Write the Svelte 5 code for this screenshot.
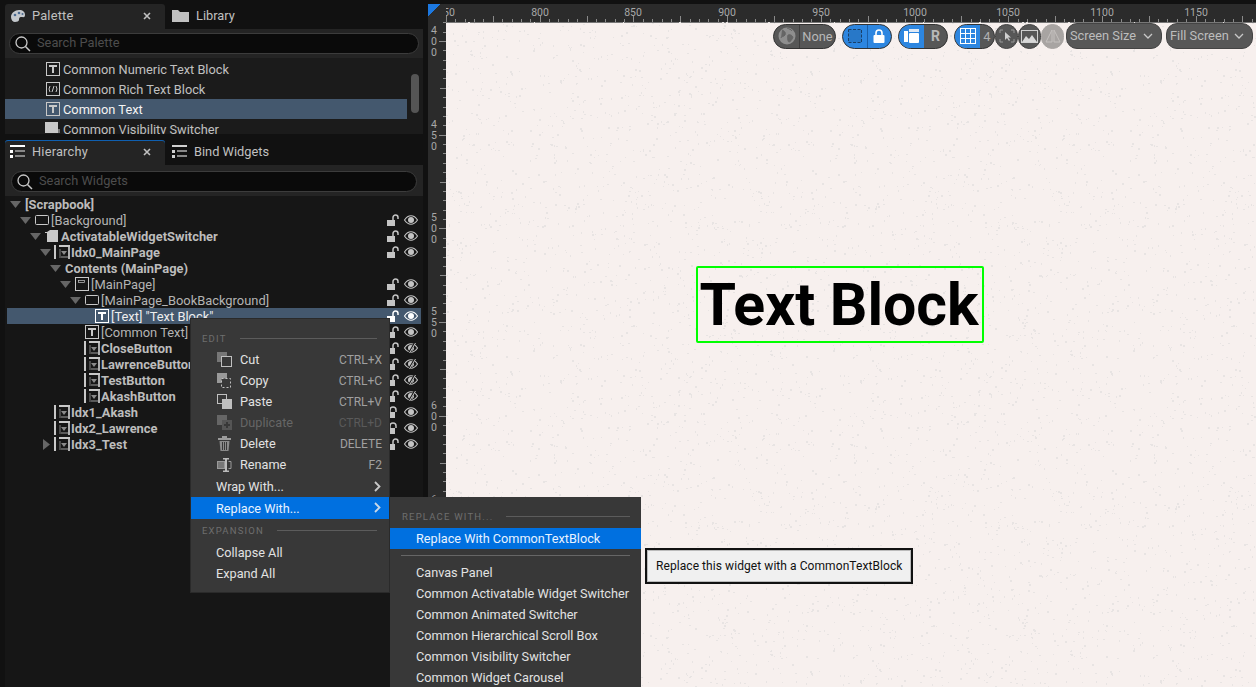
<script>
  const palette = [
    { icon: 'text', label: 'Common Numeric Text Block' },
    { icon: 'rich', label: 'Common Rich Text Block' },
    { icon: 'text', label: 'Common Text', selected: true },
    { icon: 'vis', label: 'Common Visibility Switcher' }
  ];
  const tree = [
    { d: 0, arrow: 'down', label: '[Scrapbook]', bold: true },
    { d: 1, arrow: 'down', icon: 'border', label: '[Background]', ctl: 1 },
    { d: 2, arrow: 'down', icon: 'switcher', label: 'ActivatableWidgetSwitcher', bold: true, ctl: 1 },
    { d: 3, arrow: 'down', icon: 'button', label: 'Idx0_MainPage', bold: true, ctl: 1 },
    { d: 4, arrow: 'down', label: 'Contents (MainPage)', bold: true },
    { d: 5, arrow: 'down', icon: 'page', label: '[MainPage]', ctl: 1 },
    { d: 6, arrow: 'down', icon: 'border', label: '[MainPage_BookBackground]', ctl: 1 },
    { d: 7, icon: 'text', label: '[Text] "Text Block"', selected: true, ctl: 1 },
    { d: 6, icon: 'text', label: '[Common Text]', ctl: 1 },
    { d: 6, icon: 'button', label: 'CloseButton', bold: true, ctl: 1, hidden: true },
    { d: 6, icon: 'button', label: 'LawrenceButton', bold: true, ctl: 1, hidden: true },
    { d: 6, icon: 'button', label: 'TestButton', bold: true, ctl: 1, hidden: true },
    { d: 6, icon: 'button', label: 'AkashButton', bold: true, ctl: 1, hidden: true },
    { d: 3, icon: 'button', label: 'Idx1_Akash', bold: true, ctl: 1, locked: true },
    { d: 3, icon: 'button', label: 'Idx2_Lawrence', bold: true, ctl: 1, locked: true },
    { d: 3, arrow: 'right', icon: 'button', label: 'Idx3_Test', bold: true, ctl: 1 }
  ];
  const editItems = [
    { icon: 'cut', label: 'Cut', key: 'CTRL+X' },
    { icon: 'copy', label: 'Copy', key: 'CTRL+C' },
    { icon: 'paste', label: 'Paste', key: 'CTRL+V' },
    { icon: 'dup', label: 'Duplicate', key: 'CTRL+D', off: true },
    { icon: 'trash', label: 'Delete', key: 'DELETE' },
    { icon: 'rename', label: 'Rename', key: 'F2' }
  ];
  const replaceItems = ['Canvas Panel', 'Common Activatable Widget Switcher', 'Common Animated Switcher', 'Common Hierarchical Scroll Box', 'Common Visibility Switcher', 'Common Widget Carousel'];

  const hTicks = [];
  const hLabels = [];
  for (let v = 750; v <= 1190; v += 5) {
    const x = (v - 750) * 1.874;
    hTicks.push({ x: Math.round(x), major: v % 25 === 0 });
    if (v % 50 === 0) hLabels.push({ x: Math.round(x), v });
  }
  const vTicks = [];
  const vLabels = [];
  for (let v = 380; v <= 760; v += 5) {
    const y = 41 + (v - 400) * 1.874 - 22;
    if (y < 0) continue;
    vTicks.push({ y: Math.round(y), kind: v % 50 === 0 ? 2 : v % 25 === 0 ? 1 : 0 });
    if (v % 50 === 0) vLabels.push({ y: Math.round(y), d: String(v).split('') });
  }
  let seed = 7;
  const rnd = () => (seed = (seed * 16807) % 2147483647) / 2147483647;
  const specks = [];
  for (let i = 0; i < 1100; i++) {
    specks.push({ x: Math.floor(rnd() * 300), y: Math.floor(rnd() * 300), w: rnd() > 0.6 ? 2 : 1, h: rnd() > 0.6 ? 2 : 1 });
  }
</script>

{#snippet ico(kind)}
  <svg class="ico" width="16" height="16" viewBox="0 0 16 16" aria-hidden="true">
    {#if kind === 'text'}
      <rect x="1.500" y="1.500" width="13" height="13" fill="none" stroke="currentColor" />
      <rect x="4" y="4" width="8" height="2" fill="currentColor" />
      <rect x="7" y="4" width="2" height="8" fill="currentColor" />
    {:else if kind === 'rich'}
      <rect x="1.500" y="1.500" width="13" height="13" fill="none" stroke="currentColor" />
      <path d="M5 5 4 8l1 3M11 5l1 3-1 3M9 5 7 11" fill="none" stroke="currentColor" />
    {:else if kind === 'vis'}
      <rect x="0" y="1" width="13" height="11" fill="#c8c8c8" />
      <rect x="13" y="8" width="2" height="4" fill="#777" />
    {:else if kind === 'border'}
      <rect x="1.500" y="3.500" width="13" height="9" rx="1" fill="none" stroke="currentColor" />
    {:else if kind === 'page'}
      <rect x="1.500" y="1.500" width="13" height="13" fill="none" stroke="currentColor" />
      <rect x="4.500" y="4.500" width="6" height="2" fill="none" stroke="currentColor" stroke-width=".7" />
    {:else if kind === 'switcher'}
      <path d="M6 1h8v12H3V4H1V3h2z" fill="currentColor" transform="translate(0 1)" />
    {:else if kind === 'button'}
      <rect x="0" y="1" width="2" height="14" fill="currentColor" />
      <rect x="5" y="1" width="11" height="2" fill="currentColor" />
      <rect x="14" y="3" width="2" height="12" fill="#b0b0b0" />
      <rect x="5" y="5" width="2" height="9" fill="#4a4a4a" />
      <path d="M7 7h6l-3 4z" fill="#8a8a8a" />
      <rect x="7" y="12" width="7" height="2" fill="#5a5a5a" />
    {:else if kind === 'cut'}
      <rect x="0" y="0" width="10" height="10" fill="#777" />
      <rect x="4.500" y="4.500" width="10" height="10" fill="#383838" stroke="#c0c0c0" />
    {:else if kind === 'copy'}
      <rect x="0" y="0" width="10" height="10" fill="#999" />
      <rect x="4.500" y="5.500" width="9" height="9" fill="#383838" stroke="#c0c0c0" stroke-dasharray="2 2" />
    {:else if kind === 'paste'}
      <rect x=".5" y=".5" width="9" height="9" fill="none" stroke="#c0c0c0" />
      <rect x="5" y="5" width="10" height="10" fill="#c0c0c0" />
    {:else if kind === 'dup'}
      <rect x="0" y="0" width="10" height="10" fill="#666" />
      <rect x="5" y="5" width="10" height="10" fill="#555" />
      <rect x="9" y="7" width="2" height="6" fill="#383838" />
      <rect x="7" y="9" width="6" height="2" fill="#383838" />
    {:else if kind === 'trash'}
      <rect x="1" y="2" width="13" height="2" fill="#9a9a9a" />
      <rect x="5" y="0" width="5" height="2" fill="#9a9a9a" />
      <path d="M2.500 5h10l-1 10h-8z" fill="#8a8a8a" />
      <path d="M5.500 6v8M7.500 6v8M9.500 6v8" stroke="#383838" />
    {:else if kind === 'rename'}
      <rect x=".5" y="4.500" width="7" height="7" fill="#777" stroke="#999" />
      <rect x="8" y="1" width="2" height="14" fill="#bbb" />
      <rect x="6" y="1" width="6" height="1.500" fill="#bbb" />
      <rect x="6" y="13.500" width="6" height="1.500" fill="#bbb" />
      <path d="M11.500 4.500H14v7h-2.500" fill="none" stroke="#999" />
    {/if}
  </svg>
{/snippet}

{#snippet search(text)}
  <div class="searchbox">
    <svg width="18" height="18" viewBox="0 0 18 18" aria-hidden="true">
      <circle cx="7.500" cy="7.500" r="5.500" fill="none" stroke="#c8c8c8" stroke-width="1.300" />
      <path d="M11.500 11.500 16 16" stroke="#c8c8c8" stroke-width="1.500" />
    </svg>
    <span>{text}</span>
  </div>
{/snippet}

{#snippet close()}
  <svg class="close" width="8" height="8" viewBox="0 0 8 8" aria-hidden="true"><path d="M1 1l6 6M7 1 1 7" stroke="#c0c0c0" stroke-width="1.600" /></svg>
{/snippet}

{#snippet listIcon(color)}
  <svg width="15" height="13" viewBox="0 0 15 13" aria-hidden="true">
    <rect x="0" y="0" width="15" height="2" fill={color} />
    <rect x="0" y="5" width="3" height="3" fill={color} />
    <rect x="5" y="5" width="10" height="2" fill="#888" />
    <rect x="0" y="10" width="3" height="3" fill={color} />
    <rect x="5" y="10" width="10" height="2" fill="#888" />
  </svg>
{/snippet}

<div class="app">
  <aside class="left">
    <section class="palette">
      <div class="tabs">
        <div class="tab active">
          <svg width="16" height="14" viewBox="0 0 16 14" aria-hidden="true">
            <path d="M1 8C1 4 5 1 9 1s6 2 6 5-2 2-4 2-2 2-2 3-2 2-4 2-4-2-4-5z" fill="#c4c8cc" />
            <circle cx="5" cy="6" r="1.300" fill="#4a6a90" />
            <circle cx="9" cy="4" r="1.300" fill="#4a6a90" />
            <circle cx="12.500" cy="5" r="1" fill="#4a6a90" />
          </svg>
          <span class="tablabel">Palette</span>
          {@render close()}
        </div>
        <div class="tab">
          <svg width="17" height="13" viewBox="0 0 17 13" aria-hidden="true"><path d="M0 1h6l2 2h9v10H0z" fill="#c0c0c0" /></svg>
          <span class="tablabel">Library</span>
        </div>
      </div>
      <div class="searchwrap">{@render search('Search Palette')}</div>
      <div class="palette-list">
        {#each palette as p}
          <div class="pal-row" class:selected={p.selected}>
            {@render ico(p.icon)}
            <span>{p.label}</span>
          </div>
        {/each}
        <div class="scrollthumb"></div>
      </div>
    </section>
    <section class="hierarchy">
      <div class="tabs blue">
        <div class="tab active">
          {@render listIcon('#fff')}
          <span class="tablabel">Hierarchy</span>
          {@render close()}
        </div>
        <div class="tab">
          {@render listIcon('#d0d0d0')}
          <span class="tablabel">Bind Widgets</span>
        </div>
      </div>
      <div class="searchwrap h">{@render search('Search Widgets')}</div>
      <div class="tree">
        {#each tree as r}
          <div class="row" class:selected={r.selected} class:bold={r.bold} class:noicon={!r.icon} style="padding-left:{10 * r.d + 3}px">
            <span class="arrow">
              {#if r.arrow === 'down'}
                <svg width="11" height="7" viewBox="0 0 11 7" aria-hidden="true"><path d="M0 0h11L5.500 7z" fill="#666" /></svg>
              {:else if r.arrow === 'right'}
                <svg class="ra" width="7" height="11" viewBox="0 0 7 11" aria-hidden="true"><path d="M0 0v11l7-5.500z" fill="#666" /></svg>
              {/if}
            </span>
            {#if r.icon}{@render ico(r.icon)}{/if}
            <span class="lbl">{r.label}</span>
            {#if r.ctl}
              <span class="ctl">
                <svg width="12" height="12" viewBox="0 0 12 12" aria-hidden="true">
                  {#if r.locked}
                    <path d="M3 6V4a3 3 0 0 1 6 0v2" fill="none" stroke="currentColor" stroke-width="1.500" />
                  {:else}
                    <path d="M6 6V3.500a2.500 2.500 0 0 1 5 0V5" fill="none" stroke="currentColor" stroke-width="1.500" />
                  {/if}
                  <rect x="0" y="6" width="8" height="6" fill="currentColor" />
                </svg>
                <svg width="14" height="10" viewBox="0 0 14 10" aria-hidden="true">
                  <path d="M.5 5C2.500 2 5 .8 7 .8s4.500 1.200 6.500 4.200c-2 3-4.500 4.200-6.500 4.200S2.500 8 .5 5z" fill="none" stroke="currentColor" stroke-width="1.100" />
                  <circle cx="7" cy="5" r="3" fill="currentColor" />
                  {#if r.hidden}<path d="M11 0 5 10" stroke="#161616" stroke-width="2" /><path d="M11.500 0 5.500 10" stroke="currentColor" />{/if}
                </svg>
              </span>
            {/if}
          </div>
        {/each}
      </div>
    </section>
  </aside>

  <main class="view">
    <div class="topgap"></div>
    <div class="ruler-row">
      <div class="corner"></div>
      <svg class="hruler" width="810" height="18">
        {#each hTicks as t}
          <rect x={t.x} y={t.major ? 12 : 15} width="1" height={t.major ? 6 : 3} fill="#8a8a8a" />
        {/each}
        {#each hLabels as l}
          <text x={l.x} y="12" text-anchor="middle">{l.v}</text>
        {/each}
      </svg>
    </div>
    <div class="body-row">
      <svg class="vruler" width="18" height="665">
        {#each vTicks as t}
          <rect x={t.kind === 2 ? 11 : t.kind === 1 ? 12 : 15} y={t.y} width={t.kind === 2 ? 7 : t.kind === 1 ? 6 : 3} height="1" fill="#8a8a8a" />
        {/each}
        {#each vLabels as l}
          {#each l.d as c, i}
            <text x="6" y={l.y + 4 + (i - 1) * 11} text-anchor="middle">{c}</text>
          {/each}
        {/each}
      </svg>
      <div class="canvas">
        <svg class="speck" width="100%" height="100%" aria-hidden="true">
          <defs>
            <pattern id="sp" width="300" height="300" patternUnits="userSpaceOnUse">
              {#each specks as s}<rect x={s.x} y={s.y} width={s.w} height={s.h} fill="#e8e4e3" />{/each}
            </pattern>
          </defs>
          <rect width="100%" height="100%" fill="url(#sp)" />
        </svg>
        <div class="textblock">Text Block</div>
        <div class="toolbar">
          <div class="pill">
            <span class="seg"><svg width="18" height="18" viewBox="0 0 18 18" aria-hidden="true"><circle cx="9" cy="9" r="8.500" fill="#8e8e8e" /><path d="M4 3c3 1 4 3 3 5S3 9 3 11M10 8c3-1 4 1 5 2-1 3-3 5-4 5s-2-4-1-7zM9 1c2 1 4 1 5 3" fill="#666" stroke="#666" /></svg></span>
            <span class="seg txt">None</span>
          </div>
          <div class="pill blue">
            <span class="seg"><svg width="18" height="18" viewBox="0 0 18 18" aria-hidden="true"><rect x="2.500" y="2.500" width="13" height="13" fill="#2878c8" stroke="#1a3f66" stroke-dasharray="3 1.500" /></svg></span>
            <span class="seg"><svg width="12" height="14" viewBox="0 0 12 14" aria-hidden="true"><path d="M3 6V4a3 3 0 0 1 6 0v2" fill="none" stroke="#fff" stroke-width="1.600" /><rect x="0.500" y="6" width="11" height="8" rx="1" fill="#fff" /></svg></span>
          </div>
          <div class="pill split">
            <span class="seg on"><svg width="16" height="16" viewBox="0 0 16 16" aria-hidden="true"><rect x="0" y="3" width="4" height="11" fill="#fff" /><rect x="5" y="1" width="10" height="3" fill="#dfe9f5" /><rect x="5" y="5" width="10" height="10" rx="1" fill="#fff" /></svg></span>
            <span class="seg r">R</span>
          </div>
          <div class="pill split grid">
            <span class="seg on"><svg width="16" height="16" viewBox="0 0 16 16" aria-hidden="true"><rect x=".5" y=".5" width="15" height="15" fill="none" stroke="#fff" /><path d="M5.500 0v16M10.500 0v16M0 5.500h16M0 10.500h16" stroke="#fff" /></svg></span>
            <span class="seg g4">4</span>
          </div>
          <div class="round"><svg width="16" height="14" viewBox="0 0 16 14" aria-hidden="true"><path d="M1 4V1h3M12 1h3v3M15 10v3h-3M4 13H1v-3" fill="none" stroke="#999" /><path d="M6 3v8l2-2 2 3 1-1-2-2.500h3z" fill="#d0d0d0" /></svg></div>
          <div class="round"><svg width="17" height="13" viewBox="0 0 17 13" aria-hidden="true"><rect x=".5" y=".5" width="16" height="12" fill="none" stroke="#d0d0d0" /><path d="M1 12l4-6 3 3 3-4 5 7z" fill="#d8d8d8" /></svg></div>
          <div class="round dim"><svg width="16" height="14" viewBox="0 0 16 14" aria-hidden="true"><path d="M7 1v12H1zM9 1v12h6z" fill="none" stroke="#c4c0be" /></svg></div>
          <div class="drop w1"><span>Screen Size</span><svg width="10" height="6" viewBox="0 0 10 6" aria-hidden="true"><path d="M1 1l4 4 4-4" fill="none" stroke="#c8c8c8" stroke-width="1.300" /></svg></div>
          <div class="drop w2"><span>Fill Screen</span><svg width="10" height="6" viewBox="0 0 10 6" aria-hidden="true"><path d="M1 1l4 4 4-4" fill="none" stroke="#c8c8c8" stroke-width="1.300" /></svg></div>
        </div>
      </div>
    </div>
  </main>

  <div class="menu ctx">
    <div class="head"><span>EDIT</span><i></i></div>
    {#each editItems as m}
      <div class="item icon" class:off={m.off}>
        {@render ico(m.icon)}
        <span class="m">{m.label}</span>
        <span class="key">{m.key}</span>
      </div>
    {/each}
    <div class="item sub wrap"><span class="m">Wrap With...</span><svg class="chev" width="7" height="11" viewBox="0 0 7 11" aria-hidden="true"><path d="M1 1l4.500 4.500L1 10" fill="none" stroke="#c8c8c8" stroke-width="1.800" /></svg></div>
    <div class="item sub hot"><span class="m">Replace With...</span><svg class="chev" width="7" height="11" viewBox="0 0 7 11" aria-hidden="true"><path d="M1 1l4.500 4.500L1 10" fill="none" stroke="#c8d8e8" stroke-width="1.800" /></svg></div>
    <div class="head second"><span>EXPANSION</span><i></i></div>
    <div class="item sub"><span class="m">Collapse All</span></div>
    <div class="item sub"><span class="m">Expand All</span></div>
  </div>

  <div class="menu submenu">
    <div class="head"><span>REPLACE WITH...</span><i></i></div>
    <div class="item sub hot"><span class="m">Replace With CommonTextBlock</span></div>
    <div class="sep"></div>
    {#each replaceItems as m}
      <div class="item sub"><span class="m">{m}</span></div>
    {/each}
  </div>

  <div class="tooltip">Replace this widget with a CommonTextBlock</div>
</div>

<style>
  :global(body) { margin: 0; background: #111; overflow: hidden; }
  .app {
    position: relative;
    display: flex;
    width: 1256px;
    height: 687px;
    overflow: hidden;
    font-family: Roboto, "Liberation Sans", sans-serif;
    font-size: 12.800px;
    color: #c0c0c0;
    background: #111;
  }
  .left { width: 428px; box-sizing: border-box; padding: 4px 5px 0 5px; flex: none; display: flex; flex-direction: column; }
  .palette { height: 130px; display: flex; flex-direction: column; flex: none; }
  .hierarchy { margin-top: 6px; flex: 1; display: flex; flex-direction: column; min-height: 0; }
  .tabs { height: 25px; display: flex; flex: none; position: relative; }
  .tabs.blue .tab.active { box-shadow: inset 0 1px 0 #0f5fb0; gap: 7px; }
  .tab { width: 162px; display: flex; align-items: center; gap: 7px; padding: 0 0 2px 7px; box-sizing: border-box; font-size: 12.800px; color: #c0c0c0; }
  .tab.active { width: 160px; background: #242424; border-radius: 3px 3px 0 0; padding-left: 5px; gap: 6px; }
  .tab svg { flex: none; }
  .tablabel { flex: 1; }
  .tab.active .tablabel { letter-spacing: .2px; }
  .close { margin-right: 14px; }
  .searchwrap { height: 29px; background: #242424; padding: 4px 4px 0 4px; box-sizing: border-box; flex: none; }
  .searchwrap.h { height: 31px; padding: 6px 6px 0 6px; }
  .searchbox {
    height: 21px;
    box-sizing: border-box;
    background: #0a0a0a;
    border: 1px solid #3c3c3c;
    border-radius: 11px;
    display: flex;
    align-items: center;
    gap: 5px;
    padding: 0 0 0 4px;
    color: #4d4d4d;
  }
  .searchbox span { margin-top: -2px; }
  .searchbox svg { flex: none; }
  .palette-list { flex: 1; background: #1b1b1b; position: relative; overflow: hidden; padding-top: 1px; }
  .pal-row { height: 20px; width: 402px; box-sizing: border-box; padding-left: 40px; display: flex; align-items: center; gap: 2px; }
  .pal-row.selected { background: #44586e; color: #f4f4f4; }
  .scrollthumb { position: absolute; left: 406px; top: 16px; width: 8px; height: 39px; border-radius: 4px; background: #555; }
  .tree { flex: 1; background: #161616; padding: 0 2px; }
  .row { height: 16px; display: flex; align-items: center; position: relative; white-space: nowrap; color: #b4b4b4; font-size: 12.900px; }
  .row.bold { font-weight: 700; color: #bcbcbc; }
  .row.noicon .lbl { margin-left: 1px; }
  .row.selected { background: #44586e; color: #eee; }
  .arrow { width: 14px; height: 16px; flex: none; display: flex; align-items: center; }
  .arrow .ra { margin-left: 3px; }
  .ico { flex: none; color: #c8c8c8; }
  .row .ico { margin-right: 1px; }
  .row.selected .ico { color: #fff; }
  .ctl { position: absolute; left: 380px; top: 2px; display: flex; align-items: center; gap: 5px; color: #c4c4c4; }
  .row.selected .ctl { color: #fff; }
  .view { flex: 1; display: flex; flex-direction: column; min-width: 0; }
  .topgap { height: 4px; flex: none; }
  .ruler-row { height: 18px; display: flex; background: #2b2b2b; flex: none; }
  .corner { width: 18px; flex: none; background: linear-gradient(135deg, #1c78e0 0 34%, #2b2b2b 35%); }
  .hruler text, .vruler text { font-size: 10.500px; fill: #a8a8a8; font-family: Roboto, sans-serif; }
  .body-row { flex: 1; display: flex; min-height: 0; }
  .vruler { flex: none; background: #2b2b2b; }
  .canvas { flex: 1; position: relative; background: #f7f0ee; box-shadow: inset 0 1px 0 #777; overflow: hidden; }
  .speck { position: absolute; inset: 0; }
  .textblock {
    position: absolute;
    left: 250px;
    top: 244px;
    width: 288px;
    height: 77px;
    box-sizing: border-box;
    border: 2px solid #0f0;
    border-radius: 2px;
    color: #000;
    font-weight: 700;
    font-size: 59px;
    line-height: 74px;
    padding-right: 2px;
    text-align: center;
    white-space: nowrap;
  }
  .toolbar { position: absolute; left: 327px; top: 1px; display: flex; align-items: center; color: #c0c0c0; }
  .pill { height: 25px; box-sizing: border-box; border: 1px solid #333; border-radius: 13px; background: #575757; display: flex; align-items: stretch; overflow: hidden; margin-right: 6px; }
  .pill:first-child { width: 63px; }
  .seg { display: flex; align-items: center; justify-content: center; }
  .pill:first-child .seg:first-child { width: 25px; border-right: 1px solid #3e3e3e; }
  .seg.txt { flex: 1; color: #b8b8b8; }
  .pill.blue { width: 50px; background: #2d86e0; }
  .pill.blue .seg { width: 25px; }
  .pill.blue .seg:first-child { border-right: 1px solid #1c5ea6; }
  .pill.split { width: 50px; }
  .seg.on { background: #2d86e0; width: 25px; }
  .seg.r { flex: 1; font-weight: 700; color: #b8b8b8; font-size: 14px; }
  .pill.grid { width: 41px; margin-right: 0; }
  .seg.g4 { flex: 1; font-size: 13px; color: #b0b0b0; }
  .round { width: 23px; height: 25px; border-radius: 12px; background: #575757; border: 1px solid #444; box-sizing: border-box; display: flex; align-items: center; justify-content: center; }
  .round.dim { background: #a8a4a2; border-color: #a8a4a2; }
  .drop { height: 26px; box-sizing: border-box; border-radius: 11px; background: #575757; border: 1px solid #444; display: flex; align-items: center; justify-content: space-between; padding: 0 8px 2px 3px; color: #bdbdbd; white-space: nowrap; }
  .drop svg { margin-top: 2px; }
  .drop.w1 { width: 96px; margin-left: 2px; }
  .drop.w2 { width: 87px; margin-left: 4px; }
  .menu { position: absolute; background: #383838; color: #e2e2e2; box-sizing: border-box; }
  .ctx { left: 190px; top: 318px; width: 200px; height: 275px; padding-top: 10px; border: 1px solid #2a2a2a; }
  .submenu { left: 390px; top: 497px; width: 251px; height: 190px; padding-top: 10px; }
  .head { height: 19px; margin-bottom: 1px; display: flex; align-items: center; gap: 13px; padding: 0 11px; font-size: 9.500px; letter-spacing: 1.200px; color: #6e6e6e; white-space: nowrap; }
  .ctx .head { padding-right: 12px; }
  .submenu .head { padding-left: 12px; margin-bottom: 2px; }
  .head i { flex: 1; height: 1px; background: #5c5c5c; display: block; }
  .head.second { height: 23px; margin-bottom: 0; }
  .item { height: 21px; display: flex; align-items: center; box-sizing: border-box; white-space: nowrap; font-size: 12.700px; }
  .item.icon { padding: 0 7px 0 26px; gap: 7px; }
  .item.sub { padding-left: 25px; position: relative; }
  .item.wrap { margin-top: 1px; }
  .submenu .item.sub { padding-left: 26px; }
  .item.hot { background: #0070e0; color: #e8f2ff; }
  .ctx .item.hot { height: 22px; }
  .ctx .item.sub .chev { position: absolute; right: 8px; top: 5px; }
  .m { flex: 1; }
  .key { font-size: 12px; color: #a0a0a0; }
  .off { color: #666; }
  .off .key { color: #5a5a5a; }
  .sep { height: 1px; background: #666; margin: 6px 11px 6px 11px; }
  .tooltip {
    position: absolute;
    left: 645px;
    top: 548px;
    width: 268px;
    height: 36px;
    box-sizing: border-box;
    background: #f0f0f0;
    border: 2px solid #111;
    box-shadow: inset 0 0 0 1px #bbb;
    color: #111;
    font-size: 12px;
    line-height: 32px;
    padding-left: 9px;
    letter-spacing: .07px;
    white-space: nowrap;
  }
</style>
